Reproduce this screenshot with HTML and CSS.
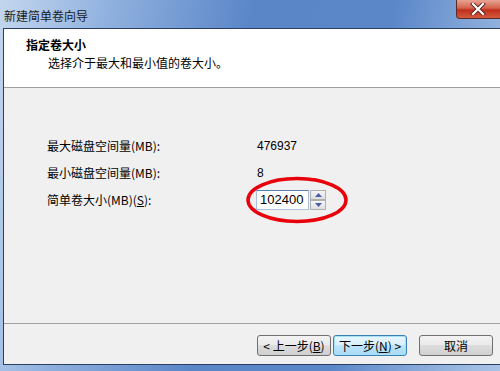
FILE: index.html
```html
<!DOCTYPE html>
<html lang="zh-CN">
<head>
    <meta charset="UTF-8">
    <title>新建简单卷向导</title>
    <link rel="stylesheet" href="styles.css">
</head>
<body>
<div class="window">
    <div class="titlebar">
        <span class="title">新建简单卷向导</span>
        <div class="close-btn">
            <svg width="16" height="12" viewBox="0 0 16 12"><path d="M3 1 L13 11 M13 1 L3 11" stroke="#5a2020" stroke-width="4" stroke-linecap="square"/><path d="M3 1 L13 11 M13 1 L3 11" stroke="#fff" stroke-width="2.2" stroke-linecap="square"/></svg>
        </div>
    </div>
    <div class="frame">
        <div class="header">
            <div class="header-title">指定卷大小</div>
            <div class="header-sub">选择介于最大和最小值的卷大小。</div>
        </div>
        <div class="body">
            <div class="row">
                <span class="label">最大磁盘空间量(MB):</span>
                <span class="value">476937</span>
            </div>
            <div class="row">
                <span class="label">最小磁盘空间量(MB):</span>
                <span class="value">8</span>
            </div>
            <div class="row">
                <span class="label">简单卷大小(MB)(<u>S</u>):</span>
                <div class="spin">
                    <div class="spin-input">102400</div>
                    <div class="spin-btns">
                        <div class="spin-btn"><svg width="7" height="4" viewBox="0 0 7 4"><path d="M0 4 L3.5 0 L7 4Z" fill="#4a5ea8"/></svg></div>
                        <div class="spin-btn"><svg width="7" height="4" viewBox="0 0 7 4"><path d="M0 0 L3.5 4 L7 0Z" fill="#4a5ea8"/></svg></div>
                    </div>
                    <svg class="mark" width="104" height="50" viewBox="0 0 104 50"><ellipse cx="52" cy="25" rx="49" ry="21.5" fill="none" stroke="#e8000a" stroke-width="3.5"/></svg>
                </div>
            </div>
        </div>
        <div class="footer">
            <button class="btn">&lt; 上一步(<u>B</u>)</button>
            <button class="btn btn-default">下一步(<u>N</u>) &gt;</button>
            <button class="btn btn-cancel">取消</button>
        </div>
    </div>
</div>
</body>
</html>
```

FILE: styles.css
```css
body {
    margin: 0;
    font-family: "Noto Sans CJK SC", "DejaVu Sans", sans-serif;
    font-size: 12px;
    color: #000;
}

.window {
    width: 500px;
    height: 371px;
    display: flex;
    flex-direction: column;
    background: linear-gradient(100deg, #c3d6ee 0%, #8fb0de 20%, #5a86c8 45%, #5b87c9 70%, #93b3dd 90%, #a9c3e6 100%);
    overflow: hidden;
}

.titlebar {
    height: 28px;
    position: relative;
    display: flex;
    align-items: center;
}

.title {
    margin-left: 4px;
    margin-top: 2px;
    font-size: 12px;
    color: #1a1a1a;
}

.close-btn {
    position: absolute;
    right: -8px;
    top: 0;
    width: 52px;
    height: 19px;
    border: 1px solid #5a2a2a;
    border-top: none;
    border-radius: 0 0 4px 4px;
    background: linear-gradient(#e8a494 0%, #d4624c 45%, #c0301c 55%, #d45a3e 100%);
    display: flex;
    align-items: center;
    justify-content: center;
    box-sizing: border-box;
    padding-right: 8px;
}

.frame {
    flex: 1;
    margin: 0 0 6px 3px;
    border-left: 1px solid #2a3f62;
    border-top: 1px solid #2a3f62;
    border-bottom: 1px solid #2a3f62;
    background: #f0f0f0;
    display: flex;
    flex-direction: column;
}

.header {
    height: 59px;
    background: #fff;
    border-bottom: 1px solid #a0a0a0;
    padding: 8px 0 0 22px;
    box-sizing: border-box;
}

.header-title {
    font-weight: bold;
    line-height: 16px;
}

.header-sub {
    margin-left: 22px;
    line-height: 16px;
    margin-top: 2px;
}

.body {
    flex: 1;
    padding: 44px 0 0 43px;
    border-bottom: 1px solid #a0a0a0;
}

.row {
    display: flex;
    align-items: center;
    height: 27px;
}

.label {
    width: 210px;
}

.value {
    font-family: "Liberation Sans", sans-serif;
}

.spin {
    display: flex;
    position: relative;
    margin-left: -1px;
}

.spin-input {
    width: 53px;
    height: 20px;
    box-sizing: border-box;
    background: #fff;
    border: 1px solid #abc1de;
    border-top-color: #5b7fae;
    padding-left: 3px;
    font-family: "Liberation Sans", sans-serif;
    font-size: 13px;
    line-height: 18px;
}

.spin-btns {
    display: flex;
    flex-direction: column;
    margin-left: 1px;
}

.spin-btn {
    width: 16px;
    height: 10px;
    box-sizing: border-box;
    border: 1px solid #b0b0b0;
    background: linear-gradient(#f6f6f6, #dedede);
    display: flex;
    align-items: center;
    justify-content: center;
}

.mark {
    position: absolute;
    left: -11px;
    top: -15px;
}

.footer {
    height: 40px;
    box-sizing: border-box;
    padding-top: 3px;
    display: flex;
    align-items: center;
    padding-left: 253px;
}

.btn {
    width: 74px;
    height: 21px;
    padding: 0;
    border: 1px solid #707070;
    border-radius: 3px;
    background: linear-gradient(#f2f2f2 0%, #ebebeb 45%, #dddddd 50%, #cfcfcf 100%);
    font-family: "Noto Sans CJK SC", sans-serif;
    font-size: 12px;
    color: #000;
    margin-right: 2px;
}

.btn-default {
    border-color: #3c7fb1;
    box-shadow: inset 0 0 0 1px #a6e1f9;
    background: linear-gradient(#eaf6fd 0%, #d9f0fc 45%, #bee6fd 50%, #a7d9f5 100%);
}

.btn-cancel {
    margin-left: 10px;
}
```
